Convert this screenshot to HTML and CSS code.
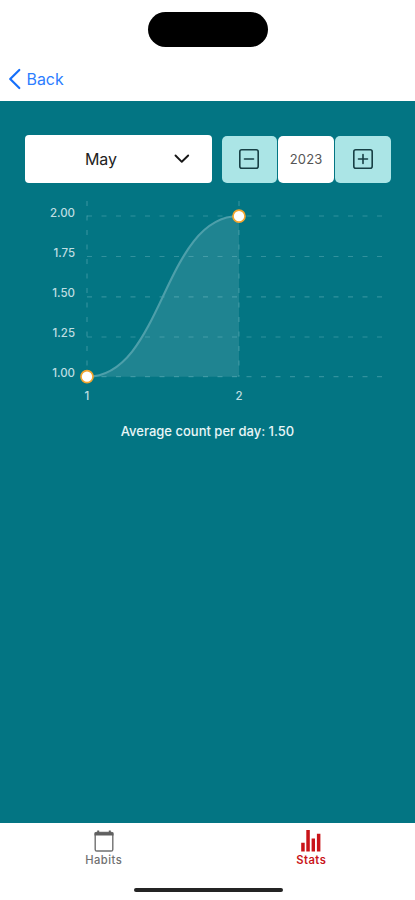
FILE: index.html
```html
<!DOCTYPE html>
<html lang="en">
<head>
<meta charset="utf-8">
<title>Stats</title>
<link rel="stylesheet" href="styles.css">
</head>
<body>
<div class="screen">
  <header class="header">
    <div class="island"></div>
    <a class="back">
      <svg class="back-icon" width="13" height="22" viewBox="0 0 13 22"><path d="M11.3 2 2.2 11l9.1 9"/></svg>
      <span>Back</span>
    </a>
  </header>
  <main class="content">
    <div class="controls">
      <div class="month">
        <span class="month-name">May</span>
        <svg class="chevron" width="16" height="10" viewBox="0 0 16 10"><path d="m1.5 1.5 6.3 6.3 6.4-6.3"/></svg>
      </div>
      <div class="stepper">
        <div class="step"><svg width="22" height="22" viewBox="0 0 22 22"><rect x="1.8" y="1.8" width="18.4" height="18.4" rx="2"/><path d="M6.5 11h9"/></svg></div>
        <div class="year">2023</div>
        <div class="step"><svg width="22" height="22" viewBox="0 0 22 22"><rect x="1.8" y="1.8" width="18.4" height="18.4" rx="2"/><path d="M6.5 11h9M11 6.5v9"/></svg></div>
      </div>
    </div>
    <svg class="chart" width="415" height="220" viewBox="0 190 415 220">
      <path class="area" d="M87 376.7C163 376.7 163 216 239 216V376.7Z"/>
      <g class="grid">
        <path d="M87 216H384M87 256.5H384M87 296.8H384M87 337H384M87 376.7H384"/>
        <path d="M87 201V376.7M239 201V376.7"/>
      </g>
      <path class="line" d="M87 376.7C163 376.7 163 216 239 216"/>
      <circle class="dot" cx="87" cy="376.7" r="6"/>
      <circle class="dot" cx="239" cy="216.2" r="6"/>
      <g class="y-labels">
        <text x="75" y="216.5">2.00</text>
        <text x="75" y="257">1.75</text>
        <text x="75" y="297">1.50</text>
        <text x="75" y="337">1.25</text>
        <text x="75" y="377">1.00</text>
      </g>
      <g class="x-labels">
        <text x="87" y="400">1</text>
        <text x="239" y="400">2</text>
      </g>
    </svg>
    <p class="average">Average count per day: 1.50</p>
  </main>
  <nav class="tabs">
    <a class="tab">
      <svg width="22" height="24" viewBox="0 0 22 24"><rect class="cal" x="2.2" y="3.4" width="17.6" height="18.6" rx="1.6"/><path class="cal-top" d="M1.5 3.4h19v3.2h-19zM4.2 1.5h2v3h-2zM15.8 1.5h2v3h-2z"/></svg>
      <span>Habits</span>
    </a>
    <a class="tab active">
      <svg width="22" height="24" viewBox="0 0 22 24"><path d="M1.2 13.7h3.5V22.5H1.2zM6.3 1h3.5v21.5H6.3zM11.6 9.6H15V22.5h-3.4zM16.9 4.7h3.5V22.5h-3.5z"/></svg>
      <span>Stats</span>
    </a>
  </nav>
  <div class="home-bar"></div>
</div>
</body>
</html>
```
FILE: styles.css
```css
* { box-sizing: border-box; }
body { margin: 0; background: #fff; font-family: Inter, sans-serif; }
.screen { width: 415px; height: 900px; display: flex; flex-direction: column; overflow: hidden; }
.header { height: 100.5px; padding-top: 11.5px; flex: none; }
.island { width: 120.5px; height: 35px; margin-left: 147.8px; border-radius: 18px; background: #000; }
.back { display: flex; align-items: center; gap: 5.5px; height: 22px; margin: 21.5px 0 0 8px; color: #2b7dff; font-size: 15.9px; }
.back-icon { fill: none; stroke: #1670fa; stroke-width: 2.2; stroke-linecap: round; stroke-linejoin: round; }
.content { height: 722.8px; flex: none; background: #037583; }
.controls { display: flex; gap: 10px; padding: 34px 24px 0 24.5px; height: 89.5px; }
.month { width: 187px; height: 48.5px; display: flex; align-items: center; border-radius: 4px; background: #fff; color: #222; font-size: 16px; }
.month-name { width: 153px; padding-top: 1px; text-align: center; }
.chevron { margin-left: -4px; fill: none; stroke: #161616; stroke-width: 1.9; stroke-linecap: round; stroke-linejoin: round; }
.stepper { display: flex; gap: 1.5px; padding-top: 1px; }
.step, .year { width: 55.4px; height: 47.5px; display: flex; align-items: center; justify-content: center; border-radius: 5px; }
.step { background: #abe5e6; }
.step svg { fill: none; stroke: #173f45; stroke-width: 1.6; stroke-linecap: round; }
.year { background: #fff; color: #555; font-size: 13px; letter-spacing: .1px; }
.chart { display: block; }
.area { fill: #fff; fill-opacity: .115; }
.grid { fill: none; stroke: #9ad4dc; stroke-opacity: .3; stroke-width: 1.2; stroke-dasharray: 5 9.5; }
.line { fill: none; stroke: #4d9faa; stroke-width: 2.2; }
.dot { fill: #fff; stroke: #f3a52e; stroke-width: 1.7; }
.y-labels, .x-labels { fill: #bfdde1; font-size: 11.5px; font-weight: 500; }
.y-labels { text-anchor: end; }
.x-labels { text-anchor: middle; }
.average { margin: 12.5px 0 0; text-align: center; color: #e9f6f7; font-size: 13px; line-height: 16px; font-weight: 500; }
.tabs { height: 63px; flex: none; display: flex; }
.tab { width: 207.5px; padding-top: 5.5px; display: flex; flex-direction: column; align-items: center; color: #707070; font-size: 11.2px; font-weight: 500; line-height: 15px; letter-spacing: .5px; }
.tab svg { flex: none; fill: currentColor; }
.tab .cal { fill: none; stroke: #707070; stroke-width: 1.4; }
.tab .cal-top { fill: #606060; }
.active { color: #c91419; font-weight: 600; }
.home-bar { width: 149px; height: 4px; margin: 2px 0 0 133.5px; border-radius: 2px; background: #242424; }
```
